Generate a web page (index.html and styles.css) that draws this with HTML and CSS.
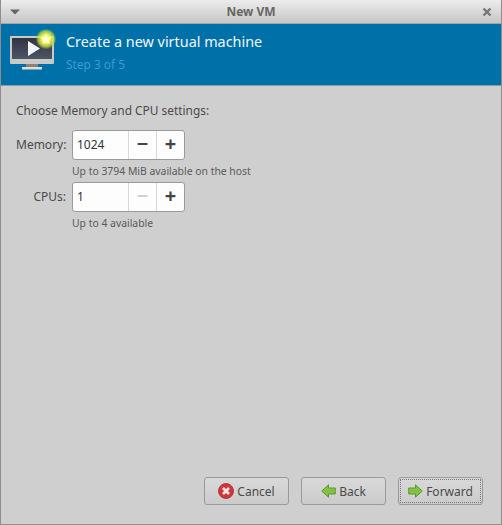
FILE: index.html
```html
<!DOCTYPE html>
<html lang="en">
<head>
    <meta charset="UTF-8">
    <title>New VM</title>
    <link rel="stylesheet" href="styles.css">
</head>
<body>
    <div class="window">
        <!-- Title bar -->
        <div class="titlebar">
            <svg class="menu-arrow" width="10" height="6" viewBox="0 0 10 6"><path d="M0 0.5H10L5 5.5Z" fill="#666"/></svg>
            <span class="title">New VM</span>
            <svg class="close" width="10" height="10" viewBox="0 0 10 10"><path d="M1.5 1.5L8.5 8.5M8.5 1.5L1.5 8.5" stroke="#777" stroke-width="2.4"/></svg>
        </div>

        <!-- Blue banner -->
        <div class="banner">
            <svg class="banner-icon" width="46" height="44" viewBox="0 0 46 44">
                <defs>
                    <radialGradient id="glow">
                        <stop offset="0.4" stop-color="#f4f75a"/>
                        <stop offset="0.75" stop-color="#c9dc3c" stop-opacity="0.75"/>
                        <stop offset="1" stop-color="#8fc040" stop-opacity="0"/>
                    </radialGradient>
                    <linearGradient id="screen" x1="0" y1="0" x2="0" y2="1">
                        <stop offset="0" stop-color="#2f3542"/>
                        <stop offset="1" stop-color="#4d5566"/>
                    </linearGradient>
                </defs>
                <rect x="0" y="7" width="44" height="28" rx="1" fill="#c9c9c6"/>
                <rect x="2" y="9" width="40" height="21" fill="url(#screen)"/>
                <rect x="16" y="35" width="12" height="3" fill="#8a8378"/>
                <rect x="12" y="38" width="20" height="2.5" fill="#dcdcd8"/>
                <path d="M18 12L30 19.5L18 27Z" fill="#f4f4f4"/>
                <circle cx="36" cy="10" r="10.5" fill="url(#glow)"/>
                <path d="M36 4.5L37.7 8.2L41.6 8.6L38.7 11.2L39.5 15L36 13L32.5 15L33.3 11.2L30.4 8.6L34.3 8.2Z" fill="#fdfbd0"/>
            </svg>
            <div class="banner-text">
                <div class="banner-title">Create a new virtual machine</div>
                <div class="banner-step">Step 3 of 5</div>
            </div>
        </div>

        <!-- Main Content -->
        <div class="content">
            <p class="heading">Choose Memory and CPU settings:</p>
            <div class="form">
                <label class="field-label">Memory:</label>
                <div class="spin">
                    <span class="spin-value">1024</span>
                    <span class="spin-btn">&minus;</span>
                    <span class="spin-btn">+</span>
                </div>
                <div class="hint">Up to 3794 MiB available on the host</div>

                <label class="field-label">CPUs:</label>
                <div class="spin">
                    <span class="spin-value">1</span>
                    <span class="spin-btn disabled">&minus;</span>
                    <span class="spin-btn">+</span>
                </div>
                <div class="hint">Up to 4 available</div>
            </div>
        </div>

        <!-- Bottom buttons -->
        <div class="footer">
            <div class="btn">
                <svg width="16" height="16" viewBox="0 0 16 16">
                    <circle cx="8" cy="8" r="7.5" fill="#d0363c" stroke="#a02a30" stroke-width="0.8"/>
                    <path d="M5 5L11 11M11 5L5 11" stroke="#f6e6e6" stroke-width="2.6"/>
                </svg>
                Cancel
            </div>
            <div class="btn">
                <svg width="15" height="14" viewBox="0 0 15 14">
                    <path d="M0.7 7L7.5 0.8V4H14.3V10H7.5V13.2Z" fill="#84c044" stroke="#5f9a2c"/>
                </svg>
                Back
            </div>
            <div class="btn focused">
                <svg width="15" height="14" viewBox="0 0 15 14">
                    <path d="M14.3 7L7.5 0.8V4H0.7V10H7.5V13.2Z" fill="#84c044" stroke="#5f9a2c"/>
                </svg>
                Forward
            </div>
        </div>
    </div>
</body>
</html>
```

FILE: styles.css
```css
html, body {
    margin: 0;
    padding: 0;
}
body {
    width: 502px;
    height: 525px;
    overflow: hidden;
    font-family: "Noto Sans", sans-serif;
    color: #4b4b4b;
}
.window {
    display: flex;
    flex-direction: column;
    height: 525px;
    box-sizing: border-box;
    background-color: #cfcfcf;
    border-left: 1px solid #8f8f8f;
    border-right: 1px solid #8f8f8f;
    border-bottom: 1px solid #8f8f8f;
}
/* Title bar */
.titlebar {
    display: flex;
    align-items: center;
    justify-content: space-between;
    height: 24px;
    flex-shrink: 0;
    padding: 0 9px 0 9px;
    box-sizing: border-box;
    background: linear-gradient(#ececec, #c6c6c6);
    border-bottom: 1px solid #a5a5a5;
}
.title {
    font-size: 12px;
    font-weight: bold;
    color: #666;
}
/* Banner */
.banner {
    display: flex;
    align-items: flex-start;
    gap: 10px;
    height: 62px;
    flex-shrink: 0;
    padding: 5px 0 0 9px;
    box-sizing: border-box;
    background-color: #0070a8;
    border-bottom: 1px solid #8c9aa2;
}
.banner-text {
    padding-top: 3px;
}
.banner-title {
    font-size: 14.4px;
    line-height: 20px;
    color: #f2f7fa;
}
.banner-step {
    margin-top: 4px;
    font-size: 11.9px;
    line-height: 16px;
    color: #3c9bd2;
}
/* Content */
.content {
    flex: 1;
    padding: 16px 15px 0;
}
.heading {
    margin: 0 0 11px;
    font-size: 11.9px;
    line-height: 17px;
}
.form {
    display: grid;
    grid-template-columns: 50px auto;
    column-gap: 6px;
    justify-content: start;
}
.field-label {
    font-size: 12px;
    line-height: 29px;
    text-align: right;
}
.spin {
    display: flex;
    width: 113px;
    height: 30px;
    box-sizing: border-box;
    background-color: #fdfdfd;
    border: 1px solid #9a9a9a;
    border-radius: 3px;
    color: #333;
}
.spin-value {
    flex: 1;
    padding-left: 4px;
    font-size: 12px;
    line-height: 28px;
}
.spin-btn {
    width: 27px;
    border-left: 1px solid #d8d8d8;
    font-size: 20px;
    line-height: 26px;
    font-weight: bold;
    text-align: center;
    color: #444;
}
.spin-btn.disabled {
    color: #d0d0d0;
}
.hint {
    grid-column: 2;
    height: 22px;
    font-size: 10.4px;
    line-height: 23px;
    color: #5a5a5a;
    white-space: nowrap;
}
/* Footer buttons */
.footer {
    display: flex;
    justify-content: flex-end;
    gap: 12px;
    padding: 0 18px 19px 0;
}
.btn {
    display: flex;
    align-items: center;
    justify-content: center;
    gap: 3px;
    width: 85px;
    height: 28px;
    box-sizing: border-box;
    background: linear-gradient(#d9d9d9, #cbcbcb);
    border: 1px solid #9a9a9a;
    border-radius: 3px;
    font-size: 12px;
}
.btn.focused {
    outline: 1px dotted #777;
    outline-offset: -3px;
}
```
